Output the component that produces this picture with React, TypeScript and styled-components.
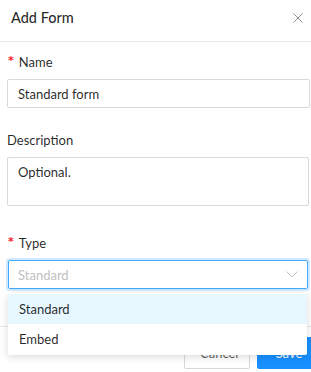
import React from "react";
import styled, { createGlobalStyle } from "styled-components";

const Global = createGlobalStyle`
  html, body { margin: 0; padding: 0; background: #fff; }
  body { font-family: Lato, "Open Sans", sans-serif; color: rgba(0,0,0,0.85); font-size: 13px; }
  * { box-sizing: border-box; }
`;

const Modal = styled.div`
  position: relative;
  width: 311px;
  height: 372px;
  overflow: hidden;
  background: #fff;
  display: flex;
  flex-direction: column;
`;

const Header = styled.div`
  height: 42px;
  flex: none;
  display: flex;
  align-items: center;
  justify-content: space-between;
  padding: 0 4px 6px 11px;
  border-bottom: 1px solid #e8e8e8;
`;

const Title = styled.div`
  font-size: 14.5px;
  font-weight: 500;
  color: rgba(0,0,0,0.85);
`;

const Close = styled.button`
  border: 0;
  background: none;
  padding: 0;
  width: 10px;
  height: 10px;
  margin-right: 4px;
  display: flex;
`;

const Body = styled.div`
  position: relative;
  padding: 9px 1px 0 7px;
  flex: 1;
`;

const Field = styled.div<{ $mb: number }>`
  display: flex;
  flex-direction: column;
  margin-bottom: ${p => p.$mb}px;
`;

const Label = styled.label<{ $required?: boolean }>`
  height: 22px;
  line-height: 22px;
  margin-bottom: 6px;
  padding-left: ${p => (p.$required ? 1 : 0)}px;
  font-size: 13px;
  display: flex;
  align-items: center;
`;

const Star = styled.span`
  color: #f5222d;
  font-family: "DejaVu Sans", sans-serif;
  font-weight: bold;
  font-size: 11px;
  margin-right: 5px;
  margin-top: -2px;
`;

const Input = styled.div`
  height: 29px;
  border: 1px solid #d9d9d9;
  border-radius: 2px;
  padding: 0 10px;
  display: flex;
  align-items: center;
  font-size: 13px;
  color: rgba(0,0,0,0.85);
`;

const TextArea = styled.div`
  height: 49px;
  width: 302px;
  border: 1px solid #d9d9d9;
  border-radius: 2px;
  padding: 4px 10px;
  font-size: 13px;
  line-height: 20px;
`;

const Select = styled.div`
  height: 29px;
  width: 300px;
  margin-left: 1px;
  border: 1px solid #40a9ff;
  border-radius: 2px;
  box-shadow: 0 0 0 2px rgba(24,144,255,0.2);
  padding: 0 9px 0 9px;
  display: flex;
  align-items: center;
  justify-content: space-between;
  color: #bfbfbf;
  font-size: 13px;
`;

const Dropdown = styled.div`
  position: absolute;
  left: 8px;
  top: 293px;
  width: 299px;
  padding: 1px 0;
  background: #fff;
  border-radius: 2px;
  box-shadow: 0 2px 8px rgba(0,0,0,0.15);
  z-index: 10;
`;

const Option = styled.div<{ $active?: boolean }>`
  height: 30px;
  display: flex;
  align-items: center;
  padding-left: 11px;
  font-size: 13px;
  color: rgba(0,0,0,0.85);
  background: ${p => (p.$active ? "#e6f7ff" : "#fff")};
`;

const Footer = styled.div`
  position: absolute;
  left: 0;
  right: 0;
  top: 326px;
  border-top: 1px solid #e8e8e8;
  display: flex;
  justify-content: flex-end;
  gap: 7px;
  padding: 10px 0 0 0;
  margin-right: -10px;
`;

const Button = styled.button<{ $primary?: boolean }>`
  height: 32px;
  padding: 0 15px;
  border-radius: 2px;
  font-family: inherit;
  font-size: 13px;
  border: 1px solid ${p => (p.$primary ? "#1890ff" : "#d9d9d9")};
  background: ${p => (p.$primary ? "#1890ff" : "#fff")};
  color: ${p => (p.$primary ? "#fff" : "rgba(0,0,0,0.65)")};
  width: ${p => (p.$primary ? 64 : 66)}px;
`;

export default function App() {
  return (
    <>
      <Global />
      <Modal>
        <Header>
          <Title>Add Form</Title>
          <Close aria-label="Close">
            <svg width="10" height="10" viewBox="0 0 10 10">
              <path d="M0.5 0.5L9.5 9.5M9.5 0.5L0.5 9.5" stroke="rgba(0,0,0,0.45)" strokeWidth="1" fill="none" />
            </svg>
          </Close>
        </Header>
        <Body>
          <Field $mb={21}>
            <Label $required><Star>*</Star>Name</Label>
            <Input>Standard form</Input>
          </Field>
          <Field $mb={26}>
            <Label>Description</Label>
            <TextArea>Optional.</TextArea>
          </Field>
          <Field $mb={0}>
            <Label $required><Star>*</Star>Type</Label>
            <Select>
              <span>Standard</span>
              <svg width="12" height="7" viewBox="0 0 12 7">
                <path d="M0.5 0.5L6 6L11.5 0.5" stroke="#bfbfbf" strokeWidth="1" fill="none" />
              </svg>
            </Select>
          </Field>
        </Body>
        <Footer>
          <Button>Cancel</Button>
          <Button $primary>Save</Button>
        </Footer>
        <Dropdown>
          <Option $active>Standard</Option>
          <Option>Embed</Option>
        </Dropdown>
      </Modal>
    </>
  );
}
